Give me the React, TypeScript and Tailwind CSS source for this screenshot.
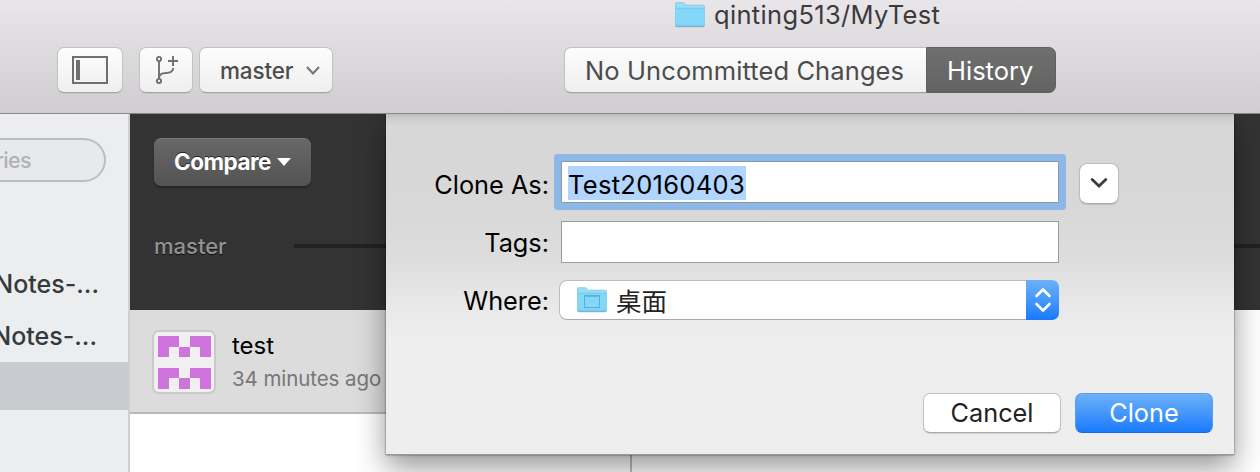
import React from "react";

const toolButton =
  "flex h-[46px] items-center rounded-[7px] border border-[#c3c1c4] border-b-[#a5a3a6] bg-linear-to-b from-[#fdfdfd] to-[#f0eff0] shadow-[0_1px_0_rgba(0,0,0,0.06)]";

function Folder({ desktop = false }: { desktop?: boolean }) {
  return (
    <svg width="32" height="26" viewBox="0 0 32 26" className="block shrink-0">
      <path d="M1.5 24V1.5Q1.5 .7 2.4 .7H9Q10 .7 11 1.7L12.5 3.2H29.5Q30.5 3.2 30.5 4.2V24Z" fill="#9addf6" stroke="#7cc5e2" strokeWidth=".8" />
      <path d="M1.5 6H30.5V24Q30.5 24.6 29.8 24.6H2.2Q1.5 24.6 1.5 24Z" fill="#84d7f8" />
      <path d="M1.5 6.2H30.5" stroke="#70c5e8" strokeWidth=".8" />
      <path d="M1.5 23H30.5" stroke="#77c7e8" strokeWidth=".8" />
      <path d="M1.8 24.7H30.2" stroke="#71a9bf" strokeWidth="1" />
      {desktop && (
        <g fill="none" stroke="#55b1d8" strokeWidth="1">
          <rect x="8.5" y="8.5" width="15" height="12" />
          <path d="M8.5 9H23.5" strokeWidth="1.6" />
        </g>
      )}
    </svg>
  );
}

function Header() {
  return (
    <header className="h-[114px] border-b border-[#89878a] bg-linear-to-b from-[#e8e6e9] to-[#cfcdd0]">
      <div className="flex h-[47px] items-start pl-[674px] pt-[2px]">
        <Folder />
        <span className="-mt-[4px] ml-[8px] text-[25.5px] leading-[34px] tracking-[0.33px] text-[#3c3a3d]">qinting513/MyTest</span>
      </div>
      <div className="flex pl-[57px]">
        <div className={`${toolButton} w-[66px] justify-center`}>
          <svg width="36" height="28" viewBox="0 0 36 28" fill="none" stroke="#6f6f6f" strokeWidth="2">
            <rect x="1" y="1" width="34" height="26" />
            <path d="M6 4V24" strokeWidth="4" />
          </svg>
        </div>
        <div className={`${toolButton} ml-[16px] w-[54px] justify-center`}>
          <svg width="24" height="30" viewBox="0 0 24 30" fill="none" stroke="#707070" strokeWidth="1.9">
            <circle cx="5" cy="4" r="2.1" />
            <circle cx="5" cy="26" r="2.1" />
            <path d="M5 6V24M5 23C6 14 18 22 19.3 13M19 1V11M14 6H24" />
          </svg>
        </div>
        <div className={`${toolButton} ml-[6px] w-[134px] pl-[20px]`}>
          <span className="w-[73px] pt-[2px] text-[22.5px] font-[450] leading-[42px] tracking-[-0.15px] text-[#4c4c4c]">master</span>
          <svg width="14" height="9" viewBox="0 0 14 9" fill="none" stroke="#747474" strokeWidth="2" className="ml-[13px]">
            <path d="M1 1L7 7.5L13 1" />
          </svg>
        </div>
        <div className={`${toolButton} ml-[231px] w-[362px] rounded-r-none border-r-0 pl-[20px]`}>
          <span className="whitespace-nowrap pt-px text-[25.5px] leading-[43px] tracking-[0.1px] text-[#4c4c4c]">No Uncommitted Changes</span>
        </div>
        <div className="h-[46px] w-[130px] rounded-r-[7px] border border-[#606060] bg-linear-to-b from-[#6f6f6f] to-[#636363] pl-[20px] pt-px text-[25.5px] leading-[44px] text-white">History</div>
      </div>
    </header>
  );
}

function Sidebar() {
  return (
    <aside className="w-[130px] shrink-0 overflow-hidden border-r-2 border-[#d0d0d1] bg-[#ebedee] pt-[24px]">
      <div className="flex h-[44px] w-[106px] items-center justify-end rounded-r-full border-2 border-l-0 border-[#b9bec2] bg-[#e7e9ea] pr-[73px] text-[21.5px] font-medium tracking-[-0.6px] text-[#b1b2b3]">
        <span className="whitespace-nowrap">ries</span>
      </div>
      <div className="mt-[77px] flex h-[52px] w-[99px] items-center justify-end text-[25px] font-[450] text-[#343a3c]">
        <span className="whitespace-nowrap">Notes-...</span>
      </div>
      <div className="flex h-[51px] w-[97px] items-center justify-end text-[25px] font-[450] text-[#343a3c]">
        <span className="whitespace-nowrap">Notes-...</span>
      </div>
      <div className="h-[48px] bg-[#c8ccd0]" />
    </aside>
  );
}

function Avatar() {
  const rows = ["11011", "10101", "00000", "11011", "10101"];
  return (
    <div className="flex h-[64px] w-[64px] items-center justify-center rounded-[7px] border-2 border-[#cacaca] bg-[#f1f0f1]">
      <svg width="53" height="53" viewBox="0 0 5 5" shapeRendering="crispEdges" fill="#ce74dc">
        {rows.flatMap((row, y) =>
          row.split("").map((c, x) => (c === "1" ? <rect key={`${x}-${y}`} x={x} y={y} width="1" height="1" /> : null)),
        )}
      </svg>
    </div>
  );
}

function Content() {
  return (
    <main className="flex min-w-0 flex-1 flex-col bg-white">
      <div className="h-[196px] bg-[#333333] pt-[24px]">
        <div className="ml-[24px] flex h-[48px] w-[157px] items-center rounded-[7px] border-t border-[#777] bg-linear-to-b from-[#686868] to-[#535353] pl-[20px] shadow-[0_2px_1px_rgba(0,0,0,0.25)]">
          <span className="w-[97px] -mt-[2px] text-[22.5px] font-bold tracking-[-0.5px] text-white [text-shadow:0_-1px_0_#222]">Compare</span>
          <svg width="14" height="8" className="ml-[6px] -mt-[2px]"><path d="M0 0H14L7 8Z" fill="#fff" /></svg>
        </div>
        <div className="mt-[42px] flex h-[36px] items-center">
          <span className="w-[164px] pl-[24px] text-[22px] font-[450] text-[#929292] [text-shadow:0_1px_0_#111]">master</span>
          <div className="h-[4px] flex-1 bg-[#222]" />
        </div>
      </div>
      <div className="flex flex-1">
        <div className="w-[502px] border-r-2 border-[#bdbdbd]">
          <div className="flex h-[104px] border-b-2 border-[#bababa] bg-[#dcdcdc] pl-[22px] pt-[20px]">
            <Avatar />
            <div className="ml-[16px]">
              <div className="text-[24px] leading-[32px] text-black">test</div>
              <div className="text-[20.5px] leading-[34px] tracking-[-0.08px] text-[#777]">34 minutes ago</div>
            </div>
          </div>
        </div>
      </div>
    </main>
  );
}

function CloneSheet() {
  const label = "w-[163px] shrink-0 text-right text-[25.3px] whitespace-nowrap";
  return (
    <section className="absolute left-[386px] top-[114px] h-[341px] w-[848px] border-b border-[#999] bg-[linear-gradient(to_bottom,#bcbcbc_0px,#cdcdcd_4px,#d7d7d7_12px,#d8d8d8_95px,#dddddd_145px,#e8e8e8_190px,#eeeeee_225px)] pt-[47px] text-black shadow-[0_0_2px_rgba(0,0,0,0.55),0_12px_28px_rgba(0,0,0,0.42)] [clip-path:inset(0_-60px_-60px_-60px)]">
      <div className="flex h-[42px] items-center">
        <div className={`${label} pt-[6px]`}>Clone As:</div>
        <div className="ml-[12px] flex h-[42px] w-[498px] items-center rounded-[1px] border border-[#8c98ab] bg-white pl-[6px] shadow-[0_0_0_7px_#8db7e6]">
          <span className="mt-[2px] h-[34px] w-[178px] bg-[#b1d5fc] pt-[3px] text-[25.5px] leading-[32px] tracking-[0.3px]">Test20160403</span>
        </div>
        <button className="ml-[20px] mt-[2px] flex h-[41px] w-[40px] items-center justify-center rounded-[8px] border border-[#bdbdbd] border-b-[#a9a9a9] bg-white shadow-[0_1px_1px_rgba(0,0,0,0.12)]">
          <svg width="18" height="12" viewBox="0 0 18 12" fill="none" stroke="#3d3d3d" strokeWidth="2.8" strokeLinecap="round"><path d="M2.2 2.5L9 9L15.8 2.5" /></svg>
        </button>
      </div>
      <div className="mt-[18px] flex h-[42px] items-center">
        <div className={`${label} pt-[2px]`}>Tags:</div>
        <div className="ml-[12px] h-[42px] w-[498px] border border-[#9b9b9b] bg-white" />
      </div>
      <div className="mt-[17px] flex h-[40px] items-center">
        <div className={`${label} pt-[2px]`}>Where:</div>
        <div className="ml-[10px] flex h-[40px] w-[467px] items-center rounded-l-[8px] border border-r-0 border-[#bdbdbd] border-b-[#a9a9a9] bg-white pl-[16px]">
          <Folder desktop />
          <span className="-mt-[1px] ml-[8px] font-['Noto_Sans_CJK_SC'] text-[25.5px] leading-[38px] text-[#222]">桌面</span>
        </div>
        <div className="flex h-[40px] w-[33px] items-center justify-center rounded-r-[7px] bg-linear-to-b from-[#6bb1f8] to-[#157afc]">
          <svg width="18" height="26" viewBox="0 0 18 26" fill="none" stroke="#fff" strokeWidth="2.6" strokeLinecap="round" strokeLinejoin="round"><path d="M2.5 9L9 2.5L15.5 9M2.5 17L9 23.5L15.5 17" /></svg>
        </div>
      </div>
      <div className="mt-[73px] flex justify-end gap-[14px] pr-[21px] text-[25.3px] leading-[37px]">
        <button className="h-[40px] w-[138px] rounded-[7px] border border-[#c2c2c2] border-b-[#aaa] bg-white pb-[2px] text-[#222] shadow-[0_1px_1px_rgba(0,0,0,0.12)]">Cancel</button>
        <button className="h-[40px] w-[138px] rounded-[7px] border border-[#5a9ce8] border-b-[#1a68dd] bg-linear-to-b from-[#6bb1f8] to-[#157afc] pb-[2px] text-white">Clone</button>
      </div>
    </section>
  );
}

export default function App() {
  return (
    <div className="relative h-[472px] w-[1260px] overflow-hidden font-[Inter,'Noto_Sans_CJK_SC',sans-serif]">
      <Header />
      <div className="flex h-[358px]">
        <Sidebar />
        <Content />
      </div>
      <CloneSheet />
    </div>
  );
}
